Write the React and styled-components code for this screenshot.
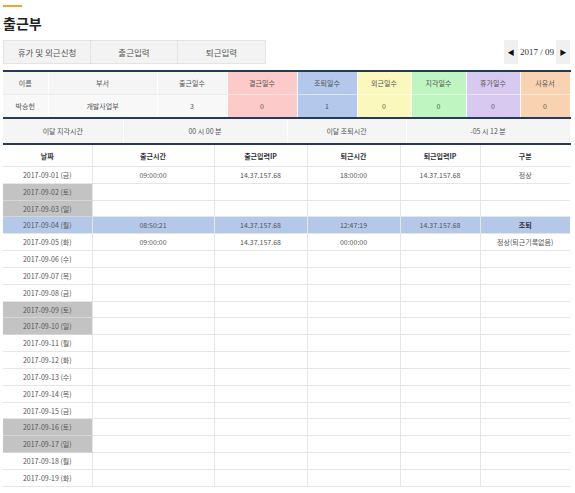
// Import: Dependencies
import React from "react";
import styled, { createGlobalStyle } from "styled-components";

// Data: summary columns
const summary = [
  { label: "이름", value: "박승헌", width: 45 },
  { label: "부서", value: "개발사업부", width: 109 },
  { label: "출근일수", value: "3", width: 70 },
  { label: "결근일수", value: "0", width: 70, color: "#fdcaca" },
  { label: "조퇴일수", value: "1", width: 60, color: "#b3c8ea" },
  { label: "외근일수", value: "0", width: 54, color: "#fbf8bd" },
  { label: "지각일수", value: "0", width: 55, color: "#bff5c1" },
  { label: "휴가일수", value: "0", width: 54, color: "#d8c9f1" },
  { label: "사유서", value: "0", width: 50, color: "#f9d2b2" },
];

const days = ["일", "월", "화", "수", "목", "금", "토"];

// Data: attendance rows for the month
const records = {
  1: ["09:00:00", "14.37.157.68", "18:00:00", "14.37.157.68", "정상"],
  4: ["08:50:21", "14.37.157.68", "12:47:19", "14.37.157.68", "조퇴"],
  5: ["09:00:00", "14.37.157.68", "00:00:00", "", "정상(퇴근기록없음)"],
};

const rows = Array.from({ length: 19 }, (_, i) => {
  const d = i + 1;
  const dow = (5 + i) % 7; // 2017-09-01 is Friday
  const dd = String(d).padStart(2, "0");
  return {
    date: `2017-09-${dd} (${days[dow]})`,
    weekend: dow === 0 || dow === 6,
    selected: d === 4,
    cells: records[d] || ["", "", "", "", ""],
  };
});

const mainCols = [89, 122, 93, 93, 80, 90];
const mainHeads = ["날짜", "출근시간", "출근입력IP", "퇴근시간", "퇴근입력IP", "구분"];

// Page: Attendance
export default function App() {
  return (
    <>
      <GlobalStyle />
      <Page>
        <Accent />
        <Title>출근부</Title>

        <Toolbar>
          <ButtonGroup>
            <TabButton>휴가 및 외근신청</TabButton>
            <TabButton>출근입력</TabButton>
            <TabButton>퇴근입력</TabButton>
          </ButtonGroup>
          <MonthNav>
            <Arrow>◀</Arrow>
            <MonthText>2017 / 09</MonthText>
            <Arrow>▶</Arrow>
          </MonthNav>
        </Toolbar>

        <SummaryTable>
          <colgroup>
            {summary.map((c) => (
              <col key={c.label} style={{ width: c.width }} />
            ))}
          </colgroup>
          <tbody>
            <tr>
              {summary.map((c) => (
                <SummaryHead key={c.label} $bg={c.color}>
                  {c.label}
                </SummaryHead>
              ))}
            </tr>
            <tr>
              {summary.map((c) => (
                <SummaryCell key={c.label} $bg={c.color}>
                  {c.value}
                </SummaryCell>
              ))}
            </tr>
          </tbody>
        </SummaryTable>

        <TimeTable>
          <colgroup>
            <col style={{ width: 120 }} />
            <col style={{ width: 164 }} />
            <col style={{ width: 119 }} />
            <col style={{ width: 164 }} />
          </colgroup>
          <tbody>
            <tr>
              <TimeCell>이달 지각시간</TimeCell>
              <TimeCell>00 시 00 분</TimeCell>
              <TimeCell>이달 조퇴시간</TimeCell>
              <TimeCell>-05 시 12 분</TimeCell>
            </tr>
          </tbody>
        </TimeTable>

        <MainTable>
          <colgroup>
            {mainCols.map((w, i) => (
              <col key={i} style={{ width: w }} />
            ))}
          </colgroup>
          <thead>
            <tr>
              {mainHeads.map((h) => (
                <MainHead key={h}>{h}</MainHead>
              ))}
            </tr>
          </thead>
          <tbody>
            {rows.map((r) => (
              <MainRow key={r.date} $selected={r.selected}>
                <DateCell $weekend={r.weekend}>{r.date}</DateCell>
                {r.cells.map((c, i) => (
                  <MainCell key={i} $bold={r.selected && i === 4}>
                    {c}
                  </MainCell>
                ))}
              </MainRow>
            ))}
          </tbody>
        </MainTable>
      </Page>
    </>
  );
}

// Global
const GlobalStyle = createGlobalStyle`
  body {
    margin: 0;
    background: #ffffff;
    font-family: "Noto Sans CJK KR", "Noto Sans", sans-serif;
    color: #555;
  }
`;

// Element: Page
const Page = styled.div`
  padding: 5px 5px 0 3px;
`;

// Element: Accent
const Accent = styled.div`
  width: 19px;
  height: 2px;
  background: #f2a431;
`;

// Element: Title
const Title = styled.h1`
  margin: 8px 0 0;
  font-size: 14px;
  line-height: 16px;
  font-weight: 700;
  color: #222;
`;

// Element: Toolbar
const Toolbar = styled.div`
  display: flex;
  justify-content: space-between;
  align-items: stretch;
  margin-top: 9px;
  height: 24px;
`;

// Element: ButtonGroup
const ButtonGroup = styled.div`
  display: flex;
  border: 1px solid #e4e4e4;
  background: #f3f3f3;
`;

// Element: TabButton
const TabButton = styled.button`
  width: 87px;
  border: none;
  border-right: 1px solid #e4e4e4;
  background: #f3f3f3;
  font-family: "Noto Sans CJK KR", sans-serif;
  font-size: 8.5px;
  color: #555;
  padding: 0;
  &:last-child {
    border-right: none;
  }
`;

// Element: MonthNav
const MonthNav = styled.div`
  display: flex;
  align-items: stretch;
`;

// Element: Arrow
const Arrow = styled.span`
  display: flex;
  align-items: center;
  justify-content: center;
  width: 14px;
  background: #f0f0f0;
  font-size: 7px;
  color: #111;
`;

// Element: MonthText
const MonthText = styled.span`
  display: flex;
  align-items: center;
  padding: 0 2px;
  font-family: "Liberation Serif", serif;
  font-size: 9px;
  color: #333;
`;

// Element: SummaryTable
const SummaryTable = styled.table`
  width: 100%;
  margin-top: 6px;
  border-collapse: collapse;
  table-layout: fixed;
  border-top: 2px solid #25395a;
  border-bottom: 2px solid #25395a;
  font-size: 7px;
`;

// Element: SummaryHead
const SummaryHead = styled.td`
  height: 22px;
  padding: 0;
  text-align: center;
  background: ${(p) => p.$bg || "#f5f5f5"};
  border-right: 1px solid #ffffff;
  border-bottom: 1px solid ${(p) => (p.$bg ? "rgba(255,255,255,0.5)" : "#ececec")};
  color: #555;
`;

// Element: SummaryCell
const SummaryCell = styled.td`
  height: 22px;
  padding: 0;
  text-align: center;
  background: ${(p) => p.$bg || "#f8f8f8"};
  border-right: 1px solid #ffffff;
  color: #555;
`;

// Element: TimeTable
const TimeTable = styled.table`
  width: 100%;
  border-collapse: collapse;
  table-layout: fixed;
  border-bottom: 2px solid #25395a;
  font-size: 7px;
`;

// Element: TimeCell
const TimeCell = styled.td`
  height: 24px;
  padding: 0;
  text-align: center;
  background: #f5f5f5;
  border-right: 1px solid #ffffff;
  color: #555;
`;

// Element: MainTable
const MainTable = styled.table`
  width: 100%;
  border-collapse: collapse;
  table-layout: fixed;
  font-size: 7px;
`;

// Element: MainHead
const MainHead = styled.th`
  height: 21px;
  padding: 0;
  font-weight: 700;
  color: #333;
  border-bottom: 1px solid #e6e6e6;
  border-left: 1px solid #e6e6e6;
  &:first-child {
    border-left: none;
  }
`;

// Element: MainRow
const MainRow = styled.tr`
  height: 16.83px;
  background: ${(p) => (p.$selected ? "#b4c8ea" : "#ffffff")};
`;

// Element: MainCell
const MainCell = styled.td`
  padding: 0;
  text-align: center;
  white-space: nowrap;
  overflow: hidden;
  border-bottom: 1px solid #e6e6e6;
  border-left: 1px solid #e6e6e6;
  font-weight: ${(p) => (p.$bold ? 700 : 400)};
  color: ${(p) => (p.$bold ? "#333" : "#555")};
`;

// Element: DateCell
const DateCell = styled.td`
  padding: 0;
  text-align: center;
  white-space: nowrap;
  border-bottom: 1px solid ${(p) => (p.$weekend ? "#d6d6d6" : "#e6e6e6")};
  background: ${(p) => (p.$weekend ? "#c3c3c3" : "transparent")};
  color: #555;
`;
